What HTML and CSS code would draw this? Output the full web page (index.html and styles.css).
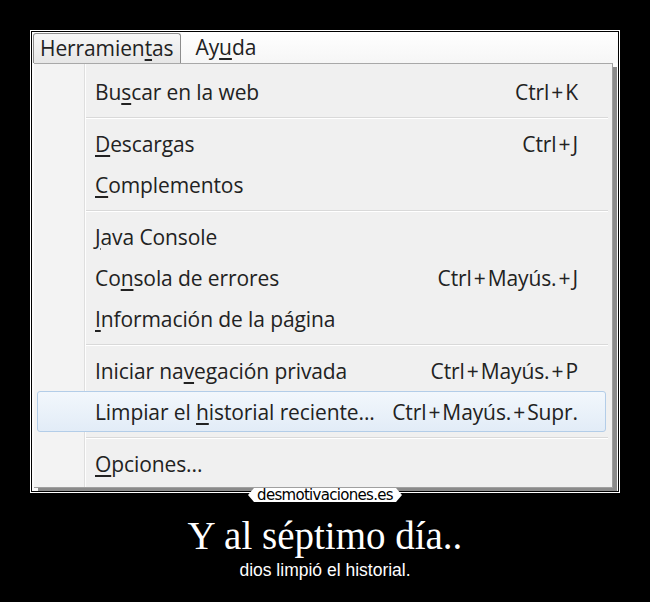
FILE: index.html
```html
<!DOCTYPE html>
<html lang="es">
<head>
    <meta charset="UTF-8">
    <title>Y al séptimo día..</title>
    <link rel="stylesheet" href="styles.css">
</head>
<body>
    <div class="poster">
        <div class="marco">
            <div class="captura">
                <div class="barra">
                    <span class="menu-top activo">Herramien<u>t</u>as</span>
                    <span class="menu-top">Ay<u>u</u>da</span>
                </div>
                <div class="desplegable">
                    <div class="item"><span>Bu<u>s</u>car en la web</span><span>Ctrl<i>+</i>K</span></div>
                    <div class="sep"></div>
                    <div class="item"><span><u>D</u>escargas</span><span>Ctrl<i>+</i>J</span></div>
                    <div class="item"><span><u>C</u>omplementos</span><span></span></div>
                    <div class="sep"></div>
                    <div class="item"><span><u>J</u>ava Console</span><span></span></div>
                    <div class="item"><span>Co<u>n</u>sola de errores</span><span>Ctrl<i>+</i>Mayús.<i>+</i>J</span></div>
                    <div class="item"><span><u>I</u>nformación de la página</span><span></span></div>
                    <div class="sep"></div>
                    <div class="item"><span>Iniciar na<u>v</u>egación privada</span><span>Ctrl<i>+</i>Mayús.<i>+</i>P</span></div>
                    <div class="item sel"><span>Limpiar el <u>h</u>istorial reciente...</span><span>Ctrl<i>+</i>Mayús.<i>+</i>Supr.</span></div>
                    <div class="sep"></div>
                    <div class="item"><span><u>O</u>pciones...</span><span></span></div>
                </div>
            </div>
            <div class="sello">desmotivaciones.es</div>
        </div>
        <h1 class="titulo">Y al séptimo día..</h1>
        <p class="texto">dios limpió el historial.</p>
    </div>
</body>
</html>
```

FILE: styles.css
```css
body {
    margin: 0;
    background: #000;
    color: #fff;
}
.poster {
    width: 650px;
    height: 602px;
    padding-top: 30px;
    box-sizing: border-box;
}
.marco {
    position: relative;
    margin-left: 30px;
    width: 590px;
    height: 463px;
    box-sizing: border-box;
    border: 1px solid #fff;
    padding: 1px;
}
.captura {
    height: 100%;
    background: #fbfbfb;
    font-family: "Open Sans", "Noto Sans", sans-serif;
    color: #222;
    overflow: hidden;
}
.barra {
    height: 31px;
    display: flex;
    align-items: flex-end;
    background: linear-gradient(#ffffff, #f6f6f6);
}
.menu-top {
    font-size: 21px;
    line-height: 29px;
    letter-spacing: -0.1px;
    padding: 0 6px 0 6px;
    margin-right: 8px;
    border: 1px solid transparent;
    border-bottom: none;
    position: relative;
    top: -1px;
}
.menu-top.activo {
    margin-left: 1px;
    border-color: #8d8d8d;
    border-radius: 3px 3px 0 0;
    background: linear-gradient(#f7f7f7, #e6e6e6);
    top: 0;
    line-height: 28px;
    padding-bottom: 1px;
}
.desplegable {
    margin-left: 2px;
    width: 578px;
    padding: 7px 0 3px;
    border-top: 1px solid #a8a8a8;
    border-right: 1px solid #9c9c9c;
    border-bottom: 1px solid #a0a0a0;
    box-shadow: 4px 4px 0 #8a8a8a;
    background: linear-gradient(to right, #f3f3f3 0 50px, #dedede 50px 51px, #fdfdfd 51px 52px, #f0f0f0 52px);
}
.item {
    display: flex;
    justify-content: space-between;
    align-items: center;
    height: 41px;
    box-sizing: border-box;
    margin: 0 6px 0 3px;
    padding: 0 27px 0 57px;
    border: 1px solid transparent;
    border-radius: 3px;
    font-size: 21px;
    letter-spacing: -0.1px;
}
.item i {
    font-style: normal;
    margin: 0 2px;
}
.item.sel {
    border-color: #b3cde8;
    background: linear-gradient(#f2f7fc, #e2ecf7);
}
.sep {
    height: 11px;
    margin: 0 4px 0 52px;
    background: linear-gradient(transparent 5px, #d9d9d9 5px 6px, #ffffff 6px 7px, transparent 7px);
}
u {
    text-underline-offset: 3px;
}
.sello {
    position: absolute;
    left: 217px;
    bottom: -10px;
    width: 154px;
    height: 14px;
    background: #fff;
    color: #000;
    font-family: "DejaVu Sans", sans-serif;
    font-size: 15px;
    line-height: 14px;
    letter-spacing: -0.7px;
    text-align: center;
    clip-path: polygon(6px 0, 148px 0, 154px 7px, 148px 14px, 6px 14px, 0 7px);
}
.titulo {
    margin: 21px 0 0;
    font-family: "Liberation Serif", serif;
    font-weight: normal;
    font-size: 39px;
    line-height: 44px;
    text-align: center;
}
.texto {
    margin: 2px 0 0;
    font-family: "Liberation Sans", Arial, sans-serif;
    font-size: 17.5px;
    text-align: center;
}
```
